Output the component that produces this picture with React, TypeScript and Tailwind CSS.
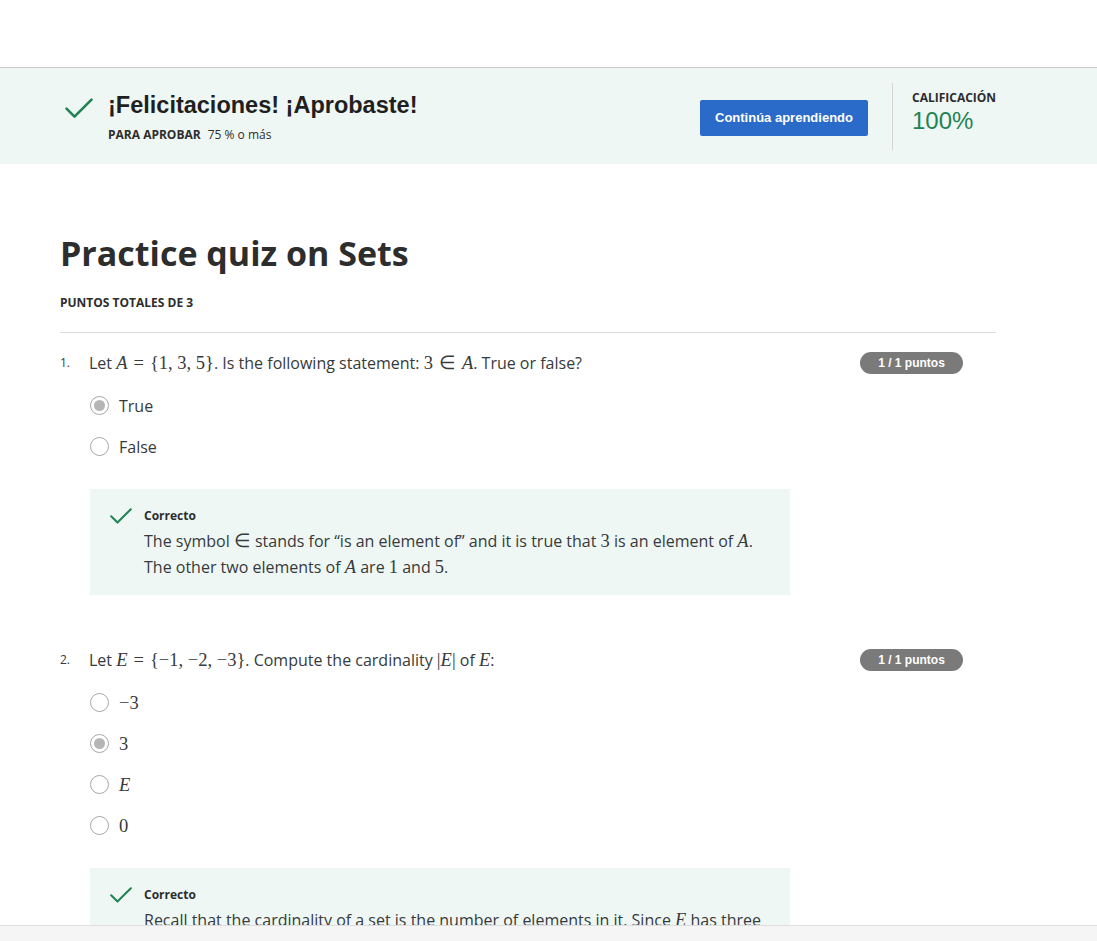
import { ReactNode } from 'react';

const V = ({ children }: { children: ReactNode }) => (
	<span className="font-['Liberation_Serif',serif] text-[18.5px] leading-none italic">{children}</span>
);
const M = ({ children }: { children: ReactNode }) => (
	<span className="font-['Liberation_Serif',serif] text-[18.5px] leading-none">{children}</span>
);
// relation symbol with the wider spacing the math renderer puts round it
const R = ({ children }: { children: ReactNode }) => (
	<span className="mx-[6px] font-['Liberation_Serif',serif] text-[18.5px] leading-none">{children}</span>
);

function Check({ size = 28 }: { size?: number }) {
	return (
		<svg width={size} height={size * 0.72} viewBox="0 0 28 20" fill="none">
			<path d="M1.5 10.5 L9.5 18.5 L26.5 1.5" stroke="#1f8354" strokeWidth="2.6" strokeLinecap="round" strokeLinejoin="round" />
		</svg>
	);
}

function Radio({ checked, label }: { checked?: boolean; label: ReactNode }) {
	return (
		<div className="flex h-[41px] items-center gap-[10px]">
			<div className="flex h-[19px] w-[19px] items-center justify-center rounded-full border-[1.5px] border-[#a8a8a8] bg-white">
				{checked ? <div className="h-[11px] w-[11px] rounded-full bg-[#b5b5b5]" /> : null}
			</div>
			<div className="text-[16px] text-[#373a3c]">{label}</div>
		</div>
	);
}

function Badge() {
	return (
		<div className="flex h-[22px] w-[103px] items-center justify-center rounded-full bg-[#7a7a7a] font-['Liberation_Sans',sans-serif] text-[12px] font-bold text-white">
			1 / 1 puntos
		</div>
	);
}

function Feedback({ children }: { children: ReactNode }) {
	return (
		<div className="w-[700px] bg-[#eff7f4] pb-[15px] pl-[20px] pt-[19px]">
			<div className="flex h-[16px] items-center gap-[12px]">
				<Check size={22} />
				<span className="text-[12px] font-bold text-[#2d2d2d]">Correcto</span>
			</div>
			<div className="mt-[4px] pl-[34px] text-[16px] leading-[26px] text-[#373a3c]">{children}</div>
		</div>
	);
}

export default function App() {
	return (
		<div className="relative h-[941px] w-[1097px] overflow-hidden bg-white font-['Open_Sans',sans-serif] text-[#2d2d2d]">
			<div className="h-[67px]" />
			<div className="flex h-[97px] items-center border-t border-[#c8c8c8] bg-[#eff7f4]">
				<div className="flex flex-1 items-start pl-[65px] pt-[2px]">
					<div className="mt-[8px]">
						<Check size={28} />
					</div>
					<div className="ml-[15px]">
						<div className="font-['Liberation_Sans',sans-serif] text-[23.5px] font-bold leading-[30px] text-[#1f1f1f]">¡Felicitaciones! ¡Aprobaste!</div>
						<div className="mt-[6px] text-[12px] text-[#2d2d2d]">
							<span className="font-bold">PARA APROBAR</span>
							<span className="ml-[7px]">75 % o más</span>
						</div>
					</div>
				</div>
				<button className="mr-[24px] mt-[4px] h-[36px] w-[168px] rounded-[2px] bg-[#2a6ac8] font-['Liberation_Sans',sans-serif] text-[13px] font-bold text-white">
					Continúa aprendiendo
				</button>
				<div className="h-[67px] w-px bg-[#d4d4d4]" />
				<div className="w-[204px] self-start pl-[19px] pt-[22px]">
					<div className="text-[12px] font-bold leading-[16px] text-[#2d2d2d]">CALIFICACIÓN</div>
					<div className="font-['Liberation_Sans',sans-serif] text-[24px] leading-[30px] text-[#1f8354]">100%</div>
				</div>
			</div>

			<div className="pl-[60px] pt-[66px]">
				<h1 className="text-[34px] font-bold leading-[46px] text-[#2d2d2d]">Practice quiz on Sets</h1>
				<div className="mt-[19px] text-[12px] font-bold leading-[16px] text-[#2d2d2d]">PUNTOS TOTALES DE 3</div>
				<div className="mt-[21px] h-px w-[936px] bg-[#dcdcdc]" />

				<div className="mt-[19px] flex h-[22px] w-[903px] items-center justify-between">
					<div className="flex items-center text-[16px] text-[#373a3c]">
						<span className="w-[29px] text-[12px]">1.</span>
						<span>
							Let <V>A</V>
							<R>=</R>
							<M>{'{'}1, 3, 5{'}'}</M>. Is the following statement: <M>3</M>
							<R>∈</R>
							<V>A</V>. True or false?
						</span>
					</div>
					<Badge />
				</div>
				<div className="mt-[11px] pl-[30px]">
					<Radio checked label="True" />
					<Radio label="False" />
				</div>
				<div className="mt-[22px] pl-[30px]">
					<Feedback>
						The symbol <M>∈</M> stands for “is an element of” and it is true that <M>3</M> is an element of <V>A</V>.
						<br />
						The other two elements of <V>A</V> are <M>1</M> and <M>5</M>.
					</Feedback>
				</div>

				<div className="mt-[54px] flex h-[22px] w-[903px] items-center justify-between">
					<div className="flex items-center text-[16px] text-[#373a3c]">
						<span className="w-[29px] text-[12px]">2.</span>
						<span>
							Let <V>E</V>
							<R>=</R>
							<M>{'{'}−1, −2, −3{'}'}</M>. Compute the cardinality <M>|</M>
							<V>E</V>
							<M>|</M> of <V>E</V>:
						</span>
					</div>
					<Badge />
				</div>
				<div className="mt-[11px] pl-[30px]">
					<Radio label={<M>−3</M>} />
					<Radio checked label={<M>3</M>} />
					<Radio label={<V>E</V>} />
					<Radio label={<M>0</M>} />
				</div>
				<div className="mt-[22px] pl-[30px]">
					<Feedback>
						Recall that the cardinality of a set is the number of elements in it. Since <V>E</V> has three
						<br />
						elements, its cardinality is <M>3</M>.
					</Feedback>
				</div>
			</div>

			<div className="absolute bottom-0 left-0 h-[16px] w-full border-t border-[#dedede] bg-[#f5f5f5]" />
		</div>
	);
}
